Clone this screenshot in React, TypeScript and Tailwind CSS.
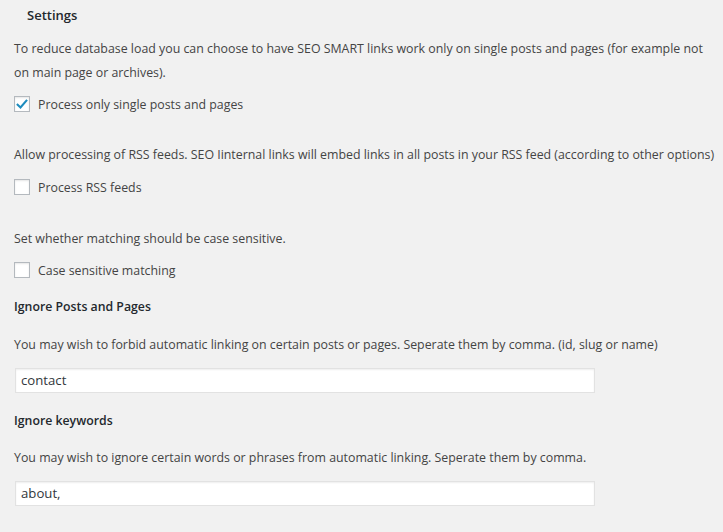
import React from 'react';

const Checkbox: React.FC<{ checked?: boolean; label: string; className?: string }> = ({ checked, label, className }) => {
  return (
    <label className={`flex items-center h-4 ${className ?? ''}`}>
      <span className="w-4 h-4 bg-white border border-[#b4b9be] shadow-[inset_0_1px_2px_rgba(0,0,0,0.1)] flex items-center justify-center shrink-0">
        {checked && (
          <svg viewBox="0 0 16 16" className="w-[15px] h-[15px]">
            <path d="M3 8.2 L6.3 11.4 L13 3.6" fill="none" stroke="#1e8cbe" strokeWidth="2.4" strokeLinecap="square" />
          </svg>
        )}
      </span>
      <span className="ml-2 text-[12.35px] leading-[16px] pt-px text-[#444]">{label}</span>
    </label>
  );
};

const TextInput: React.FC<{ value: string; className?: string }> = ({ value, className }) => (
  <div
    className={`ml-px w-[580px] h-[25px] bg-white border border-[#e2e2e2] shadow-[inset_0_1px_2px_rgba(0,0,0,0.07)] pl-[5px] flex items-center text-[13.2px] text-[#32373c] ${className ?? ''}`}
  >
    {value}
  </div>
);

export default function App() {
  return (
    <div
      className="w-[723px] h-[532px] overflow-hidden bg-[#f1f1f1] pl-[14px] pt-px text-[#444]"
      style={{ fontFamily: '"Open Sans", "Noto Sans", sans-serif' }}
    >
      <h2 className="pt-[4px] h-[24px] leading-[20px] ml-[13px] text-[13px] font-semibold text-[#23282d]">Settings</h2>

      <p className="mt-[12px] w-[700px] text-[12.37px] leading-[24px]">
        To reduce database load you can choose to have SEO SMART links work only on single posts and pages (for example not on main page or archives).
      </p>
      <Checkbox checked label="Process only single posts and pages" className="mt-[11px]" />

      <p className="mt-[31px] whitespace-nowrap text-[12.37px] leading-[24px]">
        Allow processing of RSS feeds. SEO Iinternal links will embed links in all posts in your RSS feed (according to other options)
      </p>
      <Checkbox label="Process RSS feeds" className="mt-[12px]" />

      <p className="mt-[32px] text-[12.37px] leading-[24px]">Set whether matching should be case sensitive.</p>
      <Checkbox label="Case sensitive matching" className="mt-[11px]" />

      <h3 className="mt-[17px] text-[12.3px] leading-[24px] font-semibold text-[#23282d]">Ignore Posts and Pages</h3>
      <p className="mt-[14px] text-[12.37px] leading-[24px]">
        You may wish to forbid automatic linking on certain posts or pages. Seperate them by comma. (id, slug or name)
      </p>
      <TextInput value="contact" className="mt-[11px]" />

      <h3 className="mt-[16px] text-[12.3px] leading-[24px] font-semibold text-[#23282d]">Ignore keywords</h3>
      <p className="mt-[13px] text-[12.37px] leading-[24px]">
        You may wish to ignore certain words or phrases from automatic linking. Seperate them by comma.
      </p>
      <TextInput value="about," className="mt-[11px]" />
    </div>
  );
}
